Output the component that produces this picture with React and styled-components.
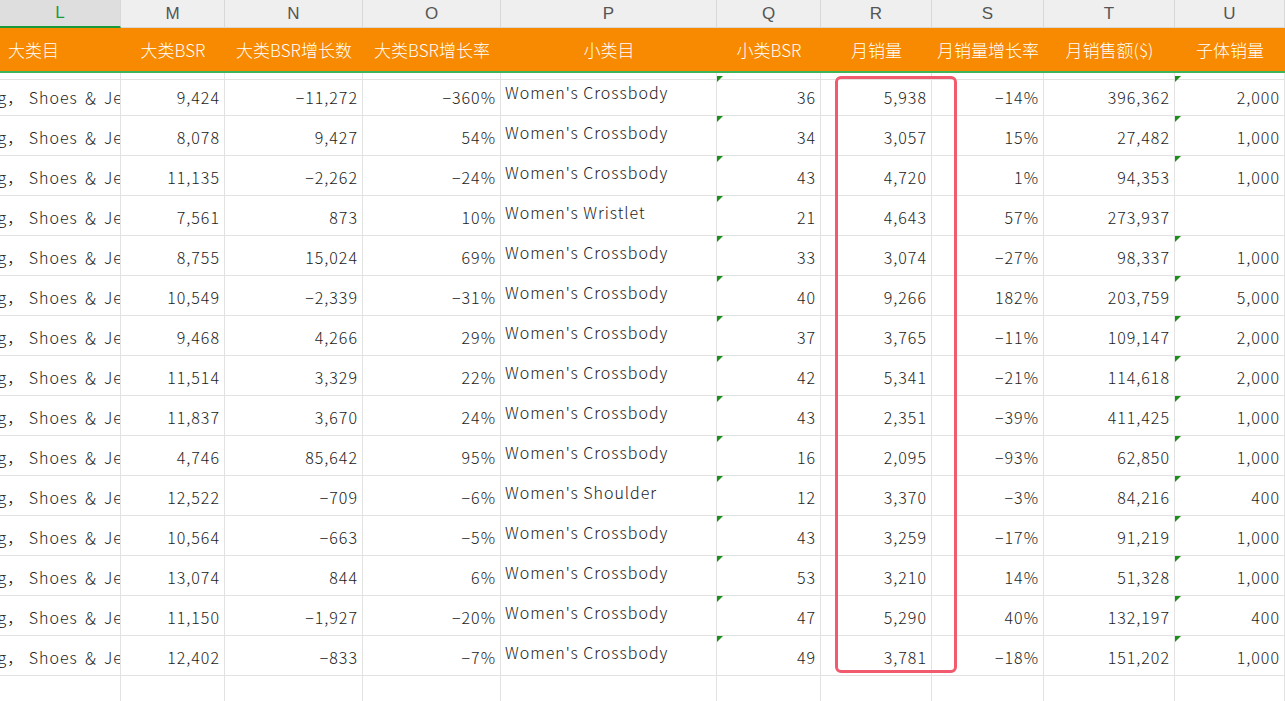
import React from "react";
import styled, { createGlobalStyle } from "styled-components";

const Global = createGlobalStyle`
  body { margin: 0; background: #fff; font-family: "Noto Sans CJK SC", "Noto Sans", sans-serif; overflow: hidden; }
`;

const cols = [
  { key: "L", w: 121, title: "大类目", align: "left" },
  { key: "M", w: 104, title: "大类BSR", align: "right" },
  { key: "N", w: 138, title: "大类BSR增长数", align: "right" },
  { key: "O", w: 138, title: "大类BSR增长率", align: "right" },
  { key: "P", w: 216, title: "小类目", align: "left" },
  { key: "Q", w: 104, title: "小类BSR", align: "right" },
  { key: "R", w: 111, title: "月销量", align: "right" },
  { key: "S", w: 112, title: "月销量增长率", align: "right" },
  { key: "T", w: 131, title: "月销售额($)", align: "right" },
  { key: "U", w: 110, title: "子体销量", align: "right" },
];

const rows = [
  ["9,424", "−11,272", "−360%", "Crossbody", "36", "5,938", "−14%", "396,362", "2,000"],
  ["8,078", "9,427", "54%", "Crossbody", "34", "3,057", "15%", "27,482", "1,000"],
  ["11,135", "−2,262", "−24%", "Crossbody", "43", "4,720", "1%", "94,353", "1,000"],
  ["7,561", "873", "10%", "Wristlet", "21", "4,643", "57%", "273,937", ""],
  ["8,755", "15,024", "69%", "Crossbody", "33", "3,074", "−27%", "98,337", "1,000"],
  ["10,549", "−2,339", "−31%", "Crossbody", "40", "9,266", "182%", "203,759", "5,000"],
  ["9,468", "4,266", "29%", "Crossbody", "37", "3,765", "−11%", "109,147", "2,000"],
  ["11,514", "3,329", "22%", "Crossbody", "42", "5,341", "−21%", "114,618", "2,000"],
  ["11,837", "3,670", "24%", "Crossbody", "43", "2,351", "−39%", "411,425", "1,000"],
  ["4,746", "85,642", "95%", "Crossbody", "16", "2,095", "−93%", "62,850", "1,000"],
  ["12,522", "−709", "−6%", "Shoulder", "12", "3,370", "−3%", "84,216", "400"],
  ["10,564", "−663", "−5%", "Crossbody", "43", "3,259", "−17%", "91,219", "1,000"],
  ["13,074", "844", "6%", "Crossbody", "53", "3,210", "14%", "51,328", "1,000"],
  ["11,150", "−1,927", "−20%", "Crossbody", "47", "5,290", "40%", "132,197", "400"],
  ["12,402", "−833", "−7%", "Crossbody", "49", "3,781", "−18%", "151,202", "1,000"],
];

const Sheet = styled.div`
  position: relative;
  width: 1285px;
  height: 701px;
  overflow: hidden;
`;

const Row = styled.div`
  display: flex;
  height: ${(p) => p.$h}px;
`;

const Letter = styled.div`
  width: ${(p) => p.$w}px;
  flex: none;
  box-sizing: border-box;
  background: ${(p) => (p.$active ? "#dedede" : "#efefef")};
  border-right: 1px solid #d8d8d8;
  border-bottom: ${(p) => (p.$active ? "2px solid #1a9b3a" : "1px solid #d8d8d8")};
  color: ${(p) => (p.$active ? "#1a9b3a" : "#555")};
  font-family: "Liberation Sans", sans-serif;
  font-size: 17px;
  display: flex;
  align-items: center;
  justify-content: center;
`;

const Head = styled.div`
  width: ${(p) => p.$w}px;
  flex: none;
  box-sizing: border-box;
  background: #f78a00;
  border-bottom: 2px solid #3fb55a;
  color: #fff;
  font-size: 17px;
  font-weight: 300;
  display: flex;
  align-items: center;
  justify-content: ${(p) => (p.$key === "L" ? "flex-start" : "center")};
  padding: 0 ${(p) => (p.$key === "L" ? 8 : 2)}px;
  white-space: nowrap;
`;

const Cell = styled.div`
  position: relative;
  width: ${(p) => p.$w}px;
  flex: none;
  box-sizing: border-box;
  border-right: 1px solid #e2e2e2;
  border-bottom: 1px solid #e2e2e2;
  color: #222;
  font-size: 16px;
  font-weight: 300;
  letter-spacing: 1px;
  display: flex;
  align-items: ${(p) => (p.$top ? "flex-start" : "flex-end")};
  justify-content: ${(p) => (p.$align === "left" ? "flex-start" : "flex-end")};
  padding: ${(p) => (p.$top ? "4px 4px 0" : "0 4px 6px")};
  overflow: hidden;
  white-space: nowrap;
`;

const Flag = styled.span`
  position: absolute;
  left: 0;
  top: 0;
  width: 0;
  height: 0;
  border-top: 6px solid #1a8f1a;
  border-right: 6px solid transparent;
`;

const Highlight = styled.div`
  position: absolute;
  left: 835px;
  top: 76px;
  width: 122px;
  height: 597px;
  box-sizing: border-box;
  border: 3px solid #f25a6e;
  border-radius: 6px;
  pointer-events: none;
`;

export default function App() {
  return (
    <Sheet>
      <Global />
      <Row $h={28}>
        {cols.map((c) => (
          <Letter key={c.key} $w={c.w} $active={c.key === "L"}>{c.key}</Letter>
        ))}
      </Row>
      <Row $h={45}>
        {cols.map((c) => (
          <Head key={c.key} $w={c.w} $key={c.key}>{c.title}</Head>
        ))}
      </Row>
      <Row $h={3}>
        {cols.map((c) => (
          <Cell key={c.key} $w={c.w} />
        ))}
      </Row>
      {rows.map((r, i) => (
        <Row key={i} $h={40}>
          <Cell $w={121} $align="left">
            <span style={{ marginLeft: -22 }}>ing， Shoes ＆ Jewelry</span>
          </Cell>
          {r.map((v, j) => {
            const c = cols[j + 1];
            if (c.key === "P") {
              return (
                <Cell key={j} $w={c.w} $align="left" $top>
                  Women's {v}
                </Cell>
              );
            }
            return (
              <Cell key={j} $w={c.w} $align={c.align}>
                {(c.key === "Q" || (c.key === "U" && v)) && <Flag />}
                {v}
              </Cell>
            );
          })}
        </Row>
      ))}
      <Row $h={40}>
        {cols.map((c) => (
          <Cell key={c.key} $w={c.w} />
        ))}
      </Row>
      <Highlight />
    </Sheet>
  );
}
